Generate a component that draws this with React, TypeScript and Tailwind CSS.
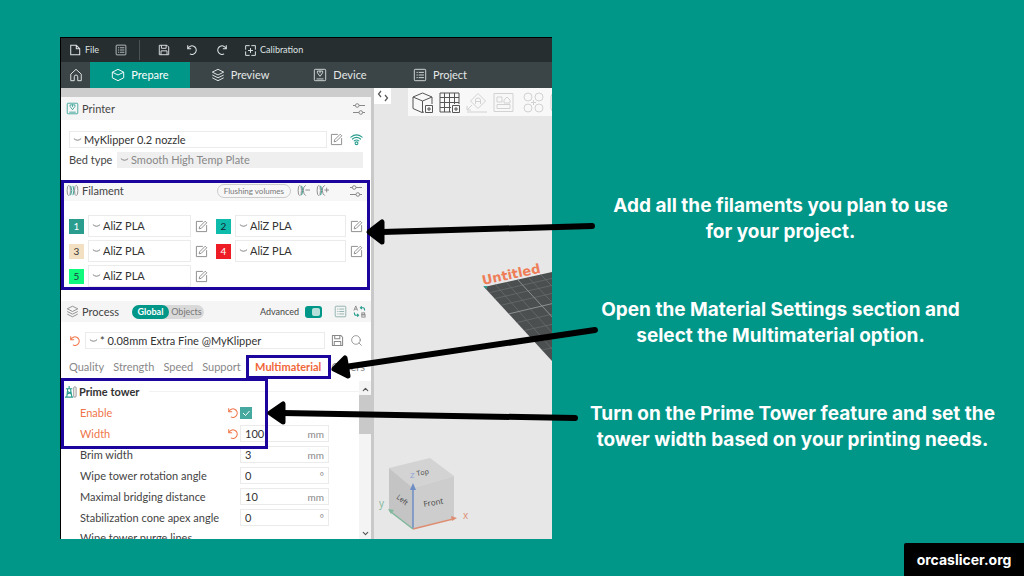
import React, { useState } from "react";
import { ChevronDown, ChevronUp, Search } from "lucide-react";

type IconProps = { className?: string };

function DeviceIcon({ className }: IconProps) {
    return (
        <svg viewBox="0 0 16 16" fill="none" stroke="currentColor" className={className}>
            <rect x="1.5" y="1.5" width="13" height="13" rx="1" />
            <path d="M4 12.5h8" />
            <path d="M5 3.5h6v2L8 9.5 5 5.5z" />
            <path d="M8 3v3" />
        </svg>
    );
}

function ListBoxIcon({ className }: IconProps) {
    return (
        <svg viewBox="0 0 16 16" fill="none" stroke="currentColor" className={className}>
            <rect x="1.5" y="1.5" width="13" height="13" rx="1" />
            <path d="M4 5h1.5M6.5 5h6M4 8h1.5M6.5 8h6M4 11h1.5M6.5 11h6" />
        </svg>
    );
}

function CalibrationIcon({ className }: IconProps) {
    return (
        <svg viewBox="0 0 16 16" fill="none" stroke="currentColor" strokeWidth="1.2" className={className}>
            <path d="M7 2H2v5M9 2h5v5M7 14H2V9M9 14h5V9" />
            <path d="M8 5v6M5 8h6" />
        </svg>
    );
}

function HomeIcon({ className }: IconProps) {
    return (
        <svg viewBox="0 0 16 16" fill="none" stroke="currentColor" strokeWidth="1.1" strokeLinejoin="round" className={className}>
            <path d="M2 7l6-5.5L14 7v7.5h-4V10a2 2 0 0 0-4 0v4.5H2z" />
        </svg>
    );
}

function CubeIcon({ className }: IconProps) {
    return (
        <svg viewBox="0 0 16 16" fill="none" stroke="currentColor" strokeWidth="1.1" strokeLinejoin="round" className={className}>
            <path d="M8 1.5l6.5 3.300v6.400L8 14.500l-6.500-3.300V4.800z" />
            <path d="M1.5 4.800L8 8l6.500-3.200" />
        </svg>
    );
}

function LayersIcon({ className }: IconProps) {
    return (
        <svg viewBox="0 0 16 16" fill="none" stroke="currentColor" strokeWidth="1.1" strokeLinejoin="round" className={className}>
            <path d="M8 1.5l6.5 3.200L8 8 1.5 4.700z" />
            <path d="M1.5 8L8 11.200 14.500 8M1.5 11.200L8 14.500l6.500-3.300" />
        </svg>
    );
}

function SlidersIcon({ className }: IconProps) {
    return (
        <svg viewBox="0 0 14 14" fill="none" stroke="currentColor" className={className}>
            <path d="M1 3.5h2.500M7 3.5h6M1 10.5h6M10.500 10.5H13" />
            <circle cx="5.200" cy="3.5" r="1.800" />
            <circle cx="8.800" cy="10.5" r="1.800" />
        </svg>
    );
}

function EditIcon({ className }: IconProps) {
    return (
        <svg viewBox="0 0 14 14" fill="none" stroke="currentColor" strokeLinejoin="round" className={className}>
            <path d="M8.500 1.5h-7v11h11v-7" />
            <path d="M4.500 9.500l.5-2.200L11 1.300l1.700 1.700-6 6z" />
        </svg>
    );
}

function WifiIcon({ className }: IconProps) {
    return (
        <svg viewBox="0 0 14 14" fill="none" stroke="currentColor" strokeWidth="1.2" strokeLinecap="round" className={className}>
            <path d="M1 4.500q6-5 12 0M2.700 6.500q4.300-3.500 8.600 0M4.500 8.500q2.500-2 5 0" />
            <circle cx="7" cy="11" r="1.5" />
        </svg>
    );
}

function SaveIcon({ className }: IconProps) {
    return (
        <svg viewBox="0 0 14 14" fill="none" stroke="currentColor" strokeWidth="1.1" strokeLinejoin="round" className={className}>
            <path d="M1.5 1.5h9l2 2v9h-11z" />
            <path d="M4 1.5V5h5.500V1.5M3.500 12.500V8h7v4.500" />
        </svg>
    );
}

function UndoIcon({ className }: IconProps) {
    return (
        <svg viewBox="0 0 14 14" fill="none" stroke="currentColor" strokeWidth="1.2" className={className}>
            <path d="M2 1.5v4h4" />
            <path d="M2.300 5.300A5 5 0 1 1 4.500 11.500" />
        </svg>
    );
}

function SpoolIcon({ sign, className }: { sign?: "minus" | "plus"; className?: string }) {
    return (
        <svg viewBox="0 0 14 14" fill="none" stroke="currentColor" className={className}>
            <ellipse cx="3" cy="7" rx="1.8" ry="5.5" />
            <path d="M5 2q2.500 5 0 10" stroke="#2a9d8f" />
            {sign ? (
                <>
                    <path d="M9.500 1.5Q6.500 2.500 6.800 7t2.700 5.500" />
                    <path d="M9 6.500h5" />
                    {sign === "plus" && <path d="M11.500 4v5" />}
                </>
            ) : (
                <>
                    <path d="M7.500 2q2 5 0 10" stroke="#2a9d8f" />
                    <ellipse cx="11" cy="7" rx="1.8" ry="5.5" />
                </>
            )}
        </svg>
    );
}

function TowerIcon({ className }: IconProps) {
    return (
        <svg viewBox="0 0 14 14" fill="none" className={className}>
            <path d="M3 13L4 4h3l1.500 9M3.500 10l4.500-3M8 10L4 7M2 4h7M5.500 1v3M1 13h9" stroke="#2a9d8f" strokeWidth="1.2" />
            <rect x="10.500" y="2" width="2.500" height="11" rx="1" stroke="#8a8a8a" />
        </svg>
    );
}

function CompareIcon({ className }: IconProps) {
    return (
        <svg viewBox="0 0 14 14" fill="none" className={className}>
            <path d="M1 6l2-5 2 5M1.700 4.500h2.600" stroke="#8a8a8a" />
            <rect x="9.500" y="8.500" width="3" height="2" stroke="#8a8a8a" />
            <rect x="9.500" y="10.500" width="3.500" height="2.500" stroke="#8a8a8a" />
            <path d="M9.500 1.5L8 3l1.500 1.500M8 3h3q1.500 0 1.500 3M4.500 9.500L6 11l-1.500 1.500M6 11H3Q1.500 11 1.500 8" stroke="#2a9d8f" strokeWidth="1.2" />
        </svg>
    );
}

function Chevron() {
    return (
        <svg viewBox="0 0 10 6" fill="none" stroke="#777" className="h-[6px] w-[9px] shrink-0">
            <path d="M1 1.5q4 3.500 8 0" />
        </svg>
    );
}

type PickerProps = { label: string; value: string; className?: string; textClass?: string };

function Picker({ label, value, className = "", textClass = "text-[#333]" }: PickerProps) {
    return (
        <label className={`flex items-center gap-[2px] px-[3px] ${className}`}>
            <Chevron />
            <select aria-label={label} defaultValue={value} className={`min-w-0 flex-1 appearance-none bg-transparent outline-none ${textClass}`}>
                <option>{value}</option>
            </select>
        </label>
    );
}

const filaments = [
    { id: 1, name: "AliZ PLA", swatch: "bg-[#2a9d8f] text-white" },
    { id: 2, name: "AliZ PLA", swatch: "bg-[#0fbcab] text-[#123]" },
    { id: 3, name: "AliZ PLA", swatch: "bg-[#f3dfc1] text-[#333]" },
    { id: 4, name: "AliZ PLA", swatch: "bg-[#ee1c25] text-white" },
    { id: 5, name: "AliZ PLA", swatch: "bg-[#10fb7e] text-[#234]" },
];

const settings = [
    { label: "Brim width", value: "3", unit: "mm" },
    { label: "Wipe tower rotation angle", value: "0", unit: "°" },
    { label: "Maximal bridging distance", value: "10", unit: "mm" },
    { label: "Stabilization cone apex angle", value: "0", unit: "°" },
];

type SettingProps = { label: string; value: string; unit: string; changed?: boolean };

function SettingRow({ label, value, unit, changed }: SettingProps) {
    const id = label.toLowerCase().replace(/ /g, "-");
    return (
        <div className="flex h-[21px] items-center pl-[19px]">
            <label htmlFor={id} className={`flex-1 ${changed ? "text-[#f0754a]" : "text-[#444]"}`}>{label}</label>
            {changed && <UndoIcon className="mr-px h-3 w-3 text-[#f0754a]" />}
            <div className="mr-[30px] flex h-[17px] w-[89px] items-center border border-[#ebebeb] pr-1 pl-1">
                <input id={id} defaultValue={value} className="w-0 min-w-0 flex-1 bg-transparent text-[11px] text-[#333] outline-none" />
                <span className="text-[10px] text-[#888]">{unit}</span>
            </div>
        </div>
    );
}

function TitleBar() {
    return (
        <header className="flex h-6 items-center bg-[#262e30] pl-2 text-[9px] text-[#dfe3e3]">
            <button type="button" className="flex items-center gap-1">
                <svg viewBox="0 0 14 14" fill="none" stroke="currentColor" strokeWidth="1.2" className="h-3 w-3">
                    <path d="M2 1.5h6.500l4 4v7H2zM8.500 1.5v4h4" />
                </svg>
                File
            </button>
            <button type="button" aria-label="Menu" className="ml-4"><ListBoxIcon className="h-3 w-3" /></button>
            <span className="ml-3 h-5 w-px bg-[#4a5254]" />
            <button type="button" aria-label="Save" className="ml-[18px]"><SaveIcon className="h-3 w-3" /></button>
            <button type="button" aria-label="Undo" className="ml-4"><UndoIcon className="h-3 w-3" /></button>
            <button type="button" aria-label="Redo" className="ml-[18px]"><UndoIcon className="h-3 w-3 -scale-x-100" /></button>
            <button type="button" className="ml-4 flex items-center gap-[3px]">
                <CalibrationIcon className="h-[13px] w-[13px]" />
                Calibration
            </button>
        </header>
    );
}

function MainTabs() {
    return (
        <nav className="flex h-[26px] items-stretch bg-[#3b4446] text-[#e4e8e8]">
            <button type="button" aria-label="Home" className="flex w-[29px] items-center justify-center"><HomeIcon className="h-[14px] w-[14px]" /></button>
            <button type="button" className="flex w-[100px] items-center justify-center gap-[6px] bg-[#009688] text-white"><CubeIcon className="h-[14px] w-[14px]" />Prepare</button>
            <button type="button" className="flex w-[100px] items-center justify-center gap-[6px]"><LayersIcon className="h-[14px] w-[14px]" />Preview</button>
            <button type="button" className="flex w-[100px] items-center justify-center gap-[6px]"><DeviceIcon className="h-[14px] w-[14px]" />Device</button>
            <button type="button" className="flex w-[100px] items-center justify-center gap-[6px]"><ListBoxIcon className="h-[14px] w-[14px]" />Project</button>
        </nav>
    );
}

function PrinterSection() {
    return (
        <section className="pb-3">
            <div className="flex h-[23px] items-center bg-[#f5f5f5] pr-[5px] pl-[5px]">
                <DeviceIcon className="h-[13px] w-[13px] text-[#2a9d8f]" />
                <h2 className="ml-[3px] flex-1 text-[#444]">Printer</h2>
                <button type="button" aria-label="Printer options"><SlidersIcon className="h-[14px] w-[14px] text-[#888]" /></button>
            </div>
            <div className="mt-[11px] flex h-[17px] items-center pr-2 pl-2">
                <Picker label="Printer" value="MyKlipper 0.2 nozzle" className="h-full flex-1 border border-[#ebebeb]" />
                <button type="button" aria-label="Edit printer" className="ml-[3px]"><EditIcon className="h-[13px] w-[13px] text-[#888]" /></button>
                <button type="button" aria-label="Connection" className="ml-[7px]"><WifiIcon className="h-[13px] w-[13px] text-[#2a9d8f]" /></button>
            </div>
            <div className="mt-1 flex h-4 items-center pr-2 pl-2">
                <span className="w-12 text-[#444]">Bed type</span>
                <Picker label="Bed type" value="Smooth High Temp Plate" className="h-full flex-1 bg-[#efefef]" textClass="text-[#888]" />
            </div>
        </section>
    );
}

function FilamentSection() {
    return (
        <section className="mr-px border-[3px] border-[#1c059c]">
            <div className="flex h-[18px] items-center bg-[#f7f7f7] pr-1 pb-[3px] pl-[2px]">
                <SpoolIcon className="h-[13px] w-[13px] text-[#888]" />
                <h2 className="ml-[3px] flex-1 text-[#444]">Filament</h2>
                <button type="button" className="h-[14px] rounded-full border border-[#ccc] px-[6px] text-[8px] leading-3 text-[#777]">Flushing volumes</button>
                <button type="button" aria-label="Remove filament" className="ml-[6px]"><SpoolIcon sign="minus" className="h-[13px] w-[13px] text-[#888]" /></button>
                <button type="button" aria-label="Add filament" className="ml-[6px]"><SpoolIcon sign="plus" className="h-[13px] w-[13px] text-[#888]" /></button>
                <button type="button" aria-label="Filament options" className="ml-5"><SlidersIcon className="h-[14px] w-[14px] text-[#888]" /></button>
            </div>
            <div className="grid grid-cols-[139px_1fr] gap-x-2 gap-y-[3px] pt-[14px] pr-1 pl-[5px]">
                {filaments.map((f) => (
                    <div key={f.id} className="flex h-[22px] items-center">
                        <span className={`flex h-[15px] w-[15px] items-center justify-center text-[10px] ${f.swatch}`}>{f.id}</span>
                        <Picker label={`Filament ${f.id}`} value={f.name} className="ml-1 h-full min-w-0 flex-1 border border-[#ebebeb]" />
                        <button type="button" aria-label={`Edit filament ${f.id}`} className="ml-1"><EditIcon className="h-[13px] w-[13px] text-[#888]" /></button>
                    </div>
                ))}
            </div>
        </section>
    );
}

const processTabs = ["Quality", "Strength", "Speed", "Support"];

function ProcessSection() {
    const [advanced, setAdvanced] = useState(true);
    return (
        <section className="mt-[11px]">
            <div className="flex h-[21px] items-center bg-[#f5f5f5] pr-[5px] pl-[5px]">
                <LayersIcon className="h-[13px] w-[13px] text-[#888]" />
                <h2 className="ml-[3px] w-[50px] text-[#444]">Process</h2>
                <div className="flex h-[14px] items-center rounded-full bg-[#d9d9d9] text-[9px] text-[#777]">
                    <button type="button" className="h-full w-[37px] rounded-full bg-[#009688] leading-3 font-bold text-white">Global</button>
                    <button type="button" className="w-[35px] leading-3">Objects</button>
                </div>
                <label className="ml-auto flex items-center gap-[6px] text-[9px] text-[#444]">
                    Advanced
                    <input type="checkbox" role="switch" checked={advanced} onChange={() => setAdvanced((v) => !v)} className="sr-only" />
                    <span className={`flex h-3 w-[17px] items-center rounded-[3px] p-[2px] ${advanced ? "justify-end bg-[#009688]" : "bg-[#bbb]"}`}>
                        <span className="h-2 w-2 rounded-[2px] bg-[#b9dfdb]" />
                    </span>
                </label>
                <button type="button" aria-label="Setting list" className="ml-3"><ListBoxIcon className="h-[13px] w-[13px] text-[#7fa8a4]" /></button>
                <button type="button" aria-label="Compare presets" className="ml-[6px]"><CompareIcon className="h-[13px] w-[13px]" /></button>
            </div>
            <div className="mt-[10px] flex h-[17px] items-center pr-2 pl-2">
                <button type="button" aria-label="Reset preset"><UndoIcon className="h-3 w-3 text-[#f0754a]" /></button>
                <Picker label="Process preset" value="* 0.08mm Extra Fine @MyKlipper" className="ml-1 h-full flex-1 border border-[#ebebeb]" />
                <button type="button" aria-label="Save preset" className="ml-[6px]"><SaveIcon className="h-[13px] w-[13px] text-[#888]" /></button>
                <button type="button" aria-label="Search settings" className="ml-[6px]"><Search size={13} strokeWidth={1.5} className="text-[#888]" /></button>
            </div>
            <div className="mt-[6px] flex h-6 items-center pr-[6px] pl-2 text-[#888]">
                {processTabs.map((t) => (
                    <button type="button" key={t} className="mr-[9px]">{t}</button>
                ))}
                <button type="button" className="-ml-1 h-full w-[85px] border-[3px] border-[#1c059c] bg-white font-bold text-[#f0673a]">Multimaterial</button>
                <button type="button" className="ml-auto">Others</button>
            </div>
        </section>
    );
}

function SettingsList() {
    const [enabled, setEnabled] = useState(true);
    return (
        <div className="relative mt-[2px]">
            <div className="flex h-[158px] overflow-hidden">
                <div className="flex-1">
                    <div className="flex h-[21px] items-center gap-[2px] pl-[3px]">
                        <TowerIcon className="h-[13px] w-[13px]" />
                        <h3 className="font-bold text-[#333]">Prime tower</h3>
                        <span className="ml-2 h-px flex-1 bg-[#f2f2f2]" />
                    </div>
                    <div className="flex h-[21px] items-center pl-[19px]">
                        <label htmlFor="enable" className="flex-1 text-[#f0754a]">Enable</label>
                        <UndoIcon className="mr-px h-3 w-3 text-[#f0754a]" />
                        <div className="relative mr-[107px] h-3 w-3">
                            <input id="enable" type="checkbox" checked={enabled} onChange={() => setEnabled((v) => !v)} className="block h-3 w-3 appearance-none bg-[#45a99f]" />
                            {enabled && (
                                <svg viewBox="0 0 12 12" fill="none" stroke="white" className="pointer-events-none absolute inset-0"><path d="M3 6l2.500 2.500L9.500 4" /></svg>
                            )}
                        </div>
                    </div>
                    <SettingRow label="Width" value="100" unit="mm" changed />
                    {settings.map((s) => (
                        <SettingRow key={s.label} {...s} />
                    ))}
                    <div className="mt-[2px] pl-[19px] text-[#444]">Wipe tower purge lines</div>
                </div>
                <div className="flex w-3 flex-col items-center bg-[#f4f4f4] text-[#555]">
                    <ChevronUp size={9} strokeWidth={3} className="mt-1" />
                    <span className="mt-px h-[39px] w-full bg-[#c9c9c9]" />
                    <ChevronDown size={9} strokeWidth={3} className="mt-auto mb-px" />
                </div>
            </div>
            <div className="pointer-events-none absolute -top-[3px] left-0 h-[71px] w-[207px] border-[3px] border-[#1c059c]" />
        </div>
    );
}

function PlateView() {
    return (
        <div className="flex min-w-0 flex-1 flex-col overflow-hidden bg-[#e7e7e7]">
            <div className="flex items-start">
                <button type="button" aria-label="Collapse sidebar" className="flex h-4 w-[17px] items-center justify-center bg-white text-[#555]">
                    <svg viewBox="0 0 12 12" fill="none" stroke="currentColor" strokeWidth="1.2" className="h-3 w-3"><path d="M4 1L1.500 4 4 7M8 5l2.500 3L8 11" /></svg>
                </button>
                <div className="ml-[17px] flex h-7 flex-1 items-center gap-[6px] overflow-hidden bg-[#f8f8f8] pl-1 text-[#555]">
                    <svg viewBox="0 0 21 21" fill="none" stroke="currentColor" className="h-[21px] w-[21px] shrink-0">
                        <path d="M12 20l-2 .5-9-4V5l9.500-4L20 5v7M1 5l9.500 4L20 5M10.500 9v11" />
                        <path d="M13.500 13.500h7v7h-7zM17 15v4M15 17h4" />
                    </svg>
                    <svg viewBox="0 0 21 21" fill="none" stroke="currentColor" className="h-[21px] w-[21px] shrink-0">
                        <path d="M12 20H1V1h19v11M1 5.500h19M1 10.500h19M1 15.500h11M5.500 1v19M10.500 1v19M15.500 1v11" />
                        <path d="M13.500 13.500h7v7h-7zM17 15v4M15 17h4" />
                    </svg>
                    <svg viewBox="0 0 21 21" fill="none" stroke="#d2d2d2" className="h-[21px] w-[21px] shrink-0">
                        <path d="M12 1.5l7.500 7.500-7.500 7.500L4.500 9zM1 20h20M1 14v4h4M1 18l5-5M9.500 12V8q0-2 2.500-2t2.500 2v4M9.500 9.500h5" />
                    </svg>
                    <svg viewBox="0 0 21 21" fill="none" stroke="#d2d2d2" className="h-[21px] w-[21px] shrink-0">
                        <path d="M1 1.5h19v18H1zM4 5h5v5H4zM11 8l3-3 3 3v3h-6zM4 12.500h13v4H4z" />
                    </svg>
                    <svg viewBox="0 0 21 21" fill="none" stroke="#d2d2d2" className="ml-[3px] h-[21px] w-[21px] shrink-0">
                        <circle cx="5" cy="5" r="4" />
                        <circle cx="16" cy="5" r="4" />
                        <circle cx="5" cy="16" r="4" />
                        <circle cx="16" cy="16" r="4" />
                        <path d="M10.500 8v5M8 10.500h5" />
                    </svg>
                    <svg viewBox="0 0 21 21" fill="none" stroke="#d2d2d2" className="h-[21px] w-[21px] shrink-0"><rect x="1" y="1" width="19" height="19" rx="4" /></svg>
                </div>
            </div>
            {/* build plate corner */}
            <svg viewBox="0 0 178 120" className="mt-[138px] h-[120px] w-[178px] shrink-0 self-end">
                <clipPath id="plate"><path d="M110 33L178 18v89z" /></clipPath>
                <path d="M110 33L178 18v89z" fill="#4c4f50" />
                <g clipPath="url(#plate)" fill="none">
                    <path d="M114 39l70-16M119 45l65-15M124 52l60-14M137 70l50-12M144 78l40-9M151 88l35-8M160 98l25-6M121 30l70 80M132 28l60 66M154 23l40 42M166 20l30 30" stroke="#6c7071" strokeWidth="0.7" />
                    <path d="M130 61l55-13M143 25l50 54" stroke="#8d9091" />
                </g>
                <path d="M109 32h4v3z" fill="#2a9d8f" />
                <text x="109" y="31" transform="rotate(-12 109 31)" fill="#ee7d58" fontSize="13" fontWeight="700" fontFamily="DejaVu Sans, sans-serif">Untitled</text>
            </svg>
            {/* orientation cube */}
            <svg viewBox="0 0 100 90" className="mt-auto mb-1 h-[90px] w-[100px] shrink-0">
                <path d="M15 23L56 13l24 18-41 12z" fill="#d3d3d3" />
                <path d="M15 23l24 20v41L15 66z" fill="#c4c4c4" />
                <path d="M39 43l41-12v42L39 84z" fill="#cdcdcd" />
                <path d="M39 84V43" stroke="#6d8ec4" strokeWidth="1.5" />
                <path d="M39 38l3 7h-6z" fill="#6d8ec4" />
                <path d="M39 84l40-10" stroke="#dd8d72" strokeWidth="1.5" />
                <path d="M83 73l-6-2 1 5z" fill="#dd8d72" />
                <path d="M39 84L17 67" stroke="#7fb89c" strokeWidth="1.5" />
                <path d="M14 64l6 1-3 4z" fill="#7fb89c" />
                <g fontFamily="Open Sans, sans-serif" fill="#444">
                    <text x="50" y="62" fontSize="8" transform="rotate(-10 50 62)">Front</text>
                    <text x="22" y="53" fontSize="7" transform="rotate(38 22 53)">Left</text>
                    <text x="43" y="31" fontSize="7" transform="rotate(-10 43 31)">Top</text>
                    <text x="36" y="33" fontSize="8" fill="#8ea3d6">Z</text>
                    <text x="5" y="62" fontSize="10" fill="#7fb89c">y</text>
                    <text x="89" y="74" fontSize="10" fill="#dd8d72">x</text>
                </g>
            </svg>
        </div>
    );
}

function Arrows() {
    return (
        <svg viewBox="0 0 1024 576" className="pointer-events-none absolute top-0 left-0 h-[576px] w-[1024px]" stroke="black" strokeLinecap="round" strokeLinejoin="round">
            <path d="M592 226L382 232" strokeWidth="6" />
            <path d="M369 232l13-10v20z" strokeWidth="5" />
            <path d="M595 330L345 367" strokeWidth="6" />
            <path d="M334 369l11-11 3 18z" strokeWidth="5" />
            <path d="M575 418L282 413" strokeWidth="6" />
            <path d="M270 413l13-9v18z" strokeWidth="5" />
        </svg>
    );
}

export default function App() {
    return (
        <main className="relative flex min-h-screen bg-[#009688] pl-[60px] font-['Lato','Noto_Sans',sans-serif]">
            <div className="mt-[37px] flex min-w-0 flex-1 flex-col self-start border-t border-l border-black bg-white text-[11px] leading-4">
                <TitleBar />
                <MainTabs />
                <div className="flex">
                    <aside className="w-[313px] shrink-0 border-r-[3px] border-[#c9c9c9] bg-white">
                        <div className="h-[9px] bg-[#cdcdcd]" />
                        <PrinterSection />
                        <FilamentSection />
                        <ProcessSection />
                        <SettingsList />
                    </aside>
                    <PlateView />
                </div>
            </div>
            <div className="flex w-[472px] shrink-0 flex-col gap-[52px] pt-[193px] pr-[19px] pl-7 text-center font-['Inter','Open_Sans',sans-serif] text-[19px] leading-[26px] font-bold text-white">
                <p className="mr-6">Add all the filaments you plan to use<br />for your project.</p>
                <p className="mr-6">Open the Material Settings section and<br />select the Multimaterial option.</p>
                <p>Turn on the Prime Tower feature and set the<br />tower width based on your printing needs.</p>
            </div>
            <a href="https://orcaslicer.org" className="absolute right-0 bottom-0 flex h-[33px] w-[120px] items-center justify-center rounded-tl-[2px] bg-black font-['Inter','Open_Sans',sans-serif] text-sm font-bold text-white">orcaslicer.org</a>
            <Arrows />
        </main>
    );
}
